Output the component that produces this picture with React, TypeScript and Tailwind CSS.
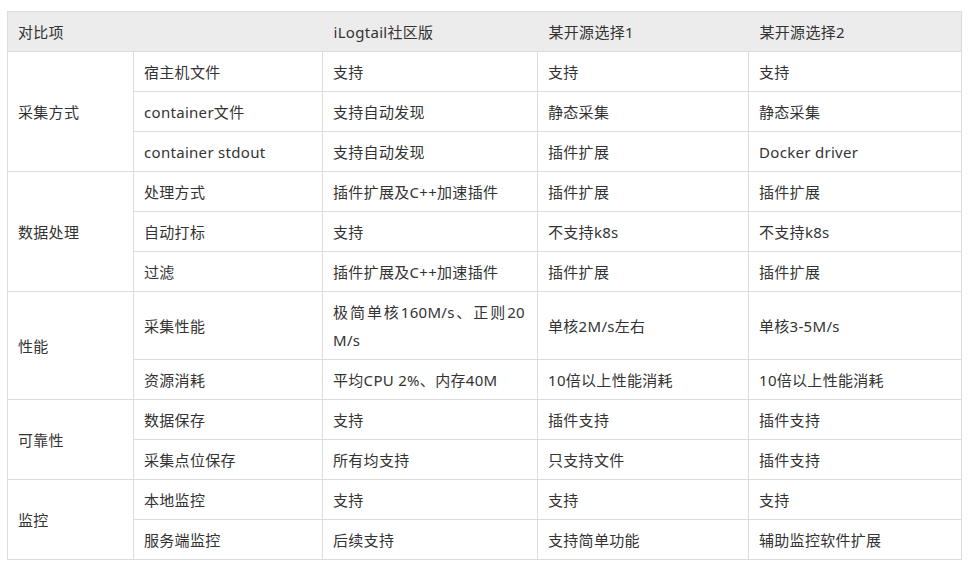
import type { ReactNode } from "react";

const GROUPS: { name: string; rows: ReactNode[][] }[] = [
  {
    name: "采集方式",
    rows: [
      ["宿主机文件", "支持", "支持", "支持"],
      ["container文件", "支持自动发现", "静态采集", "静态采集"],
      ["container stdout", "支持自动发现", "插件扩展", "Docker driver"],
    ],
  },
  {
    name: "数据处理",
    rows: [
      ["处理方式", "插件扩展及C++加速插件", "插件扩展", "插件扩展"],
      ["自动打标", "支持", "不支持k8s", "不支持k8s"],
      ["过滤", "插件扩展及C++加速插件", "插件扩展", "插件扩展"],
    ],
  },
  {
    name: "性能",
    rows: [
      [
        "采集性能",
        <>
          <span className="block whitespace-nowrap text-justify [text-align-last:justify]">
            极简单核160M/s、正则20
          </span>
          <span className="block">M/s</span>
        </>,
        "单核2M/s左右",
        "单核3-5M/s",
      ],
      ["资源消耗", "平均CPU 2%、内存40M", "10倍以上性能消耗", "10倍以上性能消耗"],
    ],
  },
  {
    name: "可靠性",
    rows: [
      ["数据保存", "支持", "插件支持", "插件支持"],
      ["采集点位保存", "所有均支持", "只支持文件", "插件支持"],
    ],
  },
  {
    name: "监控",
    rows: [
      ["本地监控", "支持", "支持", "支持"],
      ["服务端监控", "后续支持", "支持简单功能", "辅助监控软件扩展"],
    ],
  },
];

const cell = "border border-[#dcdcdc] px-[10px] pt-[6px] pb-[5px] align-middle";

export default function App() {
  return (
    <div className="min-h-[578px] w-[968px] bg-white pl-[7px] pt-[11px] font-['Noto_Sans','Noto_Sans_CJK_SC',sans-serif] text-[15px] leading-[28px] tracking-[0.3px] text-[#333]">
      <table className="w-[954px] table-fixed border-collapse">
        <colgroup>
          <col className="w-[126px]" />
          <col className="w-[189px]" />
          <col className="w-[215px]" />
          <col className="w-[211px]" />
          <col className="w-[213px]" />
        </colgroup>
        <thead>
          <tr className="bg-[#ececec]">
            <th colSpan={2} className="border-y border-l border-[#dcdcdc] px-[10px] pt-[6px] pb-[5px] text-left font-normal">
              对比项
            </th>
            <th className="border-y border-[#dcdcdc] px-[11px] pt-[6px] pb-[5px] text-left font-normal">
              iLogtail社区版
            </th>
            <th className="border-y border-[#dcdcdc] px-[11px] pt-[6px] pb-[5px] text-left font-normal">
              某开源选择1
            </th>
            <th className="border-y border-r border-[#dcdcdc] px-[11px] pt-[6px] pb-[5px] text-left font-normal">
              某开源选择2
            </th>
          </tr>
        </thead>
        <tbody>
          {GROUPS.map((g) =>
            g.rows.map((r, i) => (
              <tr key={g.name + i}>
                {i === 0 && (
                  <td rowSpan={g.rows.length} className={cell}>
                    {g.name}
                  </td>
                )}
                <td className={cell}>{r[0]}</td>
                <td className={`${cell} pr-[12px]`}>{r[1]}</td>
                <td className={cell}>{r[2]}</td>
                <td className={cell}>{r[3]}</td>
              </tr>
            ))
          )}
        </tbody>
      </table>
    </div>
  );
}
